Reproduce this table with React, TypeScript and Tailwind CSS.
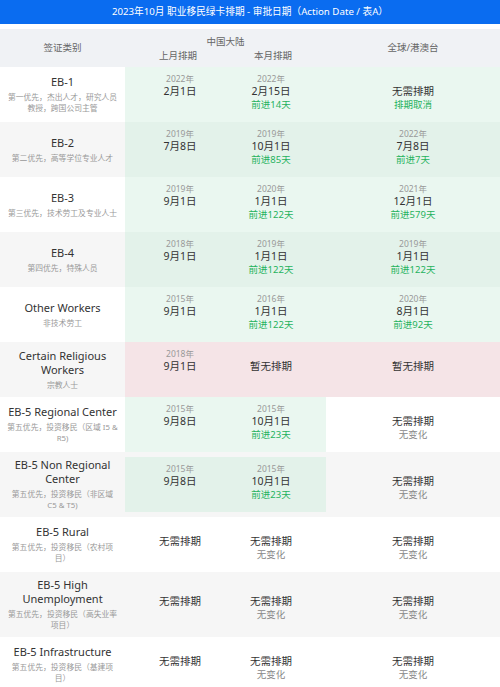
import React from "react";

type Cell = {
  year?: string;
  main: string;
  note?: string;
  noteGreen?: boolean;
  bg?: "green" | "pink" | "none";
};

type Row = {
  label: string[];
  sub: string[];
  cells: [Cell, Cell, Cell];
};

const NO_NEED: Cell = { main: "无需排期", note: "无变化", bg: "none" };

const rows: Row[] = [
  {
    label: ["EB-1"],
    sub: ["第一优先，杰出人才，研究人员", "教授，跨国公司主管"],
    cells: [
      { year: "2022年", main: "2月1日", bg: "green" },
      { year: "2022年", main: "2月15日", note: "前进14天", noteGreen: true, bg: "green" },
      { main: "无需排期", note: "排期取消", noteGreen: true, bg: "green" },
    ],
  },
  {
    label: ["EB-2"],
    sub: ["第二优先，高等学位专业人才"],
    cells: [
      { year: "2019年", main: "7月8日", bg: "green" },
      { year: "2019年", main: "10月1日", note: "前进85天", noteGreen: true, bg: "green" },
      { year: "2022年", main: "7月8日", note: "前进7天", noteGreen: true, bg: "green" },
    ],
  },
  {
    label: ["EB-3"],
    sub: ["第三优先，技术劳工及专业人士"],
    cells: [
      { year: "2019年", main: "9月1日", bg: "green" },
      { year: "2020年", main: "1月1日", note: "前进122天", noteGreen: true, bg: "green" },
      { year: "2021年", main: "12月1日", note: "前进579天", noteGreen: true, bg: "green" },
    ],
  },
  {
    label: ["EB-4"],
    sub: ["第四优先，特殊人员"],
    cells: [
      { year: "2018年", main: "9月1日", bg: "green" },
      { year: "2019年", main: "1月1日", note: "前进122天", noteGreen: true, bg: "green" },
      { year: "2019年", main: "1月1日", note: "前进122天", noteGreen: true, bg: "green" },
    ],
  },
  {
    label: ["Other Workers"],
    sub: ["非技术劳工"],
    cells: [
      { year: "2015年", main: "9月1日", bg: "green" },
      { year: "2016年", main: "1月1日", note: "前进122天", noteGreen: true, bg: "green" },
      { year: "2020年", main: "8月1日", note: "前进92天", noteGreen: true, bg: "green" },
    ],
  },
  {
    label: ["Certain Religious", "Workers"],
    sub: ["宗教人士"],
    cells: [
      { year: "2018年", main: "9月1日", bg: "pink" },
      { main: "暂无排期", bg: "pink" },
      { main: "暂无排期", bg: "pink" },
    ],
  },
  {
    label: ["EB-5 Regional Center"],
    sub: ["第五优先，投资移民（区域 I5 &", "R5)"],
    cells: [
      { year: "2015年", main: "9月8日", bg: "green" },
      { year: "2015年", main: "10月1日", note: "前进23天", noteGreen: true, bg: "green" },
      NO_NEED,
    ],
  },
  {
    label: ["EB-5 Non Regional", "Center"],
    sub: ["第五优先，投资移民（非区域", "C5 & T5)"],
    cells: [
      { year: "2015年", main: "9月8日", bg: "green" },
      { year: "2015年", main: "10月1日", note: "前进23天", noteGreen: true, bg: "green" },
      NO_NEED,
    ],
  },
  {
    label: ["EB-5 Rural"],
    sub: ["第五优先，投资移民（农村项", "目）"],
    cells: [{ main: "无需排期", bg: "none" }, NO_NEED, NO_NEED],
  },
  {
    label: ["EB-5 High", "Unemployment"],
    sub: ["第五优先，投资移民（高失业率", "项目）"],
    cells: [{ main: "无需排期", bg: "none" }, NO_NEED, NO_NEED],
  },
  {
    label: ["EB-5 Infrastructure"],
    sub: ["第五优先，投资移民（基建项", "目）"],
    cells: [{ main: "无需排期", bg: "none" }, NO_NEED, NO_NEED],
  },
];

function CellView({ cell, even, width, pad }: { cell: Cell; even: boolean; width: string; pad: string }) {
  const bg =
    cell.bg === "green"
      ? even
        ? "bg-[#e3f2ea]"
        : "bg-[#eaf7f0]"
      : cell.bg === "pink"
      ? "bg-[#f5e4e7]"
      : "";
  return (
    <div className={`${width} ${pad} ${bg} h-[55px] pt-[6px] flex flex-col items-center`}>
      <div className="h-[12px] leading-[12px] text-[8.5px] text-[#999999]">{cell.year ?? ""}</div>
      <div className="leading-[12px] text-[10.5px] text-[#333333] whitespace-nowrap">{cell.main}</div>
      {cell.note && (
        <div
          className={`leading-[16px] text-[9.5px] whitespace-nowrap ${
            cell.noteGreen ? "text-[#1fb25d]" : "text-[#888888]"
          }`}
        >
          {cell.note}
        </div>
      )}
    </div>
  );
}

export default function App() {
  return (
    <div
      className="w-[500px] min-h-[687px] bg-white"
      style={{ fontFamily: '"Noto Sans", "Noto Sans CJK SC", sans-serif' }}
    >
      <div className="h-[24px] bg-[#0a6cf0] text-white text-[9.7px] flex items-center justify-center whitespace-nowrap">
        2023年10月 职业移民绿卡排期 - 审批日期（Action Date / 表A）
      </div>
      <div className="h-[5px]" />
      <div className="flex h-[38px] bg-[#f0f2f5] text-[9.5px] text-[#666666]">
        <div className="w-[125px] flex items-center justify-center">签证类别</div>
        <div className="w-[201px] pt-[6px] flex flex-col">
          <div className="leading-[13px] text-center">中国大陆</div>
          <div className="flex leading-[16px]">
            <div className="w-[101px] pl-[5px] text-center">上月排期</div>
            <div className="w-[100px] pr-[6px] text-center">本月排期</div>
          </div>
        </div>
        <div className="flex-1 flex items-center justify-center">全球/港澳台</div>
      </div>
      {rows.map((r, i) => {
        const even = i % 2 === 1;
        const stripe = even ? "bg-[#f6f6f6]" : "bg-white";
        return (
          <div key={i} className={`flex items-center ${stripe}`}>
            <div className="w-[125px] min-h-[55px] self-stretch py-[6px] px-[6px] flex flex-col items-center justify-center text-center">
              {r.label.map((l, j) => (
                <div key={j} className="text-[11px] leading-[14px] text-[#333333] whitespace-nowrap">
                  {l}
                </div>
              ))}
              <div className="mt-[3px]">
                {r.sub.map((s, j) => (
                  <div key={j} className="text-[7.8px] leading-[11px] text-[#999999] whitespace-nowrap">
                    {s}
                  </div>
                ))}
              </div>
            </div>
            <CellView cell={r.cells[0]} even={even} width="w-[101px]" pad="pl-[9px]" />
            <CellView cell={r.cells[1]} even={even} width="w-[100px]" pad="pr-[10px]" />
            <CellView cell={r.cells[2]} even={even} width="flex-1" pad="" />
          </div>
        );
      })}
    </div>
  );
}
